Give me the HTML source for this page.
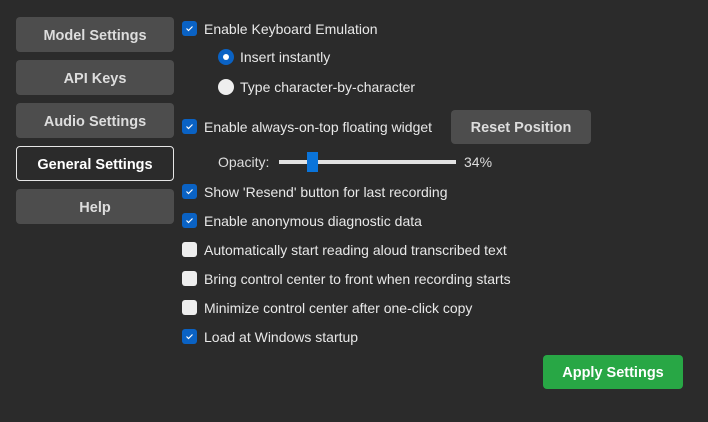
<!DOCTYPE html>
<html><head><style>
body{margin:0;width:708px;height:422px;background:#2b2b2b;font-family:"Liberation Sans",sans-serif;overflow:hidden;position:relative;color:#e8e8e8}
.b{position:absolute;left:16px;width:158px;height:35px;background:#4d4d4d;border-radius:4px;color:#ddd;font-weight:bold;font-size:14.5px;display:flex;align-items:center;justify-content:center;box-sizing:border-box;padding-top:2px}
.sel{background:#2b2b2b;border:1px solid #e6e6e6;color:#fff}
.r{position:absolute;left:182px;font-size:14px;height:16px;line-height:16px;white-space:nowrap}
.r span.t{position:absolute;left:22px;top:0}
.cb{position:absolute;left:0;top:0;width:15px;height:15px;border-radius:3px;background:#eee}
.cb.on{background:#0a62c4}
.cb.on svg{position:absolute;left:2px;top:2px}
.rad{position:absolute;left:0;top:0;width:16px;height:16px;border-radius:50%;background:#eee}
.rad.on{background:#0a62c4}
.rad.on::after{content:"";position:absolute;left:5px;top:5px;width:6px;height:6px;border-radius:50%;background:#fff}
</style></head><body>
<div class="b" style="top:17px">Model Settings</div>
<div class="b" style="top:60px">API Keys</div>
<div class="b" style="top:103px">Audio Settings</div>
<div class="b sel" style="top:146px">General Settings</div>
<div class="b" style="top:189px">Help</div>

<div class="r" style="top:21px"><div class="cb on"><svg width="11" height="11" viewBox="0 0 11 11"><path d="M2.5 5.5l2 2 4-4" stroke="#fff" stroke-width="1.2" fill="none"/></svg></div><span class="t">Enable Keyboard Emulation</span></div>
<div class="r" style="top:49px;left:218px"><div class="rad on"></div><span class="t">Insert instantly</span></div>
<div class="r" style="top:79px;left:218px"><div class="rad"></div><span class="t">Type character-by-character</span></div>
<div class="r" style="top:119px"><div class="cb on"><svg width="11" height="11" viewBox="0 0 11 11"><path d="M2.5 5.5l2 2 4-4" stroke="#fff" stroke-width="1.2" fill="none"/></svg></div><span class="t">Enable always-on-top floating widget</span></div>
<div style="position:absolute;left:451px;top:110px;width:140px;height:34px;background:#4d4d4d;border-radius:4px;color:#ddd;font-weight:bold;font-size:14.5px;display:flex;align-items:center;justify-content:center;box-sizing:border-box;padding-top:2px">Reset Position</div>
<div style="position:absolute;left:218px;top:154px;font-size:14px;color:#ddd">Opacity:</div>
<div style="position:absolute;left:279px;top:160px;width:177px;height:4px;background:#e2e2e2"></div>
<div style="position:absolute;left:307px;top:152px;width:11px;height:20px;background:#0a74da"></div>
<div style="position:absolute;left:464px;top:154px;font-size:14px;color:#ddd">34%</div>
<div class="r" style="top:184px"><div class="cb on"><svg width="11" height="11" viewBox="0 0 11 11"><path d="M2.5 5.5l2 2 4-4" stroke="#fff" stroke-width="1.2" fill="none"/></svg></div><span class="t">Show 'Resend' button for last recording</span></div>
<div class="r" style="top:213px"><div class="cb on"><svg width="11" height="11" viewBox="0 0 11 11"><path d="M2.5 5.5l2 2 4-4" stroke="#fff" stroke-width="1.2" fill="none"/></svg></div><span class="t">Enable anonymous diagnostic data</span></div>
<div class="r" style="top:242px"><div class="cb"></div><span class="t">Automatically start reading aloud transcribed text</span></div>
<div class="r" style="top:271px"><div class="cb"></div><span class="t">Bring control center to front when recording starts</span></div>
<div class="r" style="top:300px"><div class="cb"></div><span class="t">Minimize control center after one-click copy</span></div>
<div class="r" style="top:329px"><div class="cb on"><svg width="11" height="11" viewBox="0 0 11 11"><path d="M2.5 5.5l2 2 4-4" stroke="#fff" stroke-width="1.2" fill="none"/></svg></div><span class="t">Load at Windows startup</span></div>
<div style="position:absolute;left:543px;top:355px;width:140px;height:34px;background:#28a745;border-radius:4px;color:#fff;font-weight:bold;font-size:14.5px;display:flex;align-items:center;justify-content:center;box-sizing:border-box;padding-top:2px">Apply Settings</div>
</body></html>
